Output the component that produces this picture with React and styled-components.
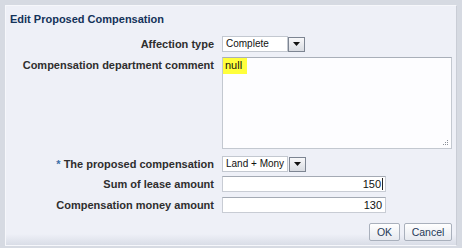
import styled, { createGlobalStyle } from 'styled-components'

const GlobalStyle = createGlobalStyle`
  html, body {
    margin: 0;
    padding: 0;
    background: #d6dae2;
    font-family: "Liberation Sans", Arial, sans-serif;
  }
`

const Frame = styled.div`
  width: 462px;
  height: 248px;
  box-sizing: border-box;
  padding: 5px 5px 2px 5px;
`

const Dialog = styled.div`
  width: 452px;
  height: 241px;
  box-sizing: border-box;
  border: 1px solid #f6f7fb;
  border-right-color: #c9cdd6;
  background: #eef0f7;
  display: flex;
  flex-direction: column;
`

const Title = styled.div`
  padding: 6px 0 0 4px;
  font-size: 11px;
  font-weight: bold;
  line-height: 14px;
  color: #14335a;
`

const Form = styled.div`
  display: flex;
  flex-direction: column;
  margin-top: 10px;
`

const Row = styled.div`
  display: grid;
  grid-template-columns: 208px 1fr;
  column-gap: 8px;
  align-items: ${(p) => (p.top ? 'start' : 'center')};
  margin-top: ${(p) => p.gap || 0}px;
`

const Label = styled.label`
  text-align: right;
  font-size: 11px;
  font-weight: bold;
  color: #2e2e2e;
  line-height: 14px;
  white-space: nowrap;
  padding-top: ${(p) => (p.top ? '1px' : '0')};
`

const Required = styled.span`
  color: #3b6fa8;
  margin-right: 3px;
`

const Select = styled.div`
  display: flex;
  align-items: center;
  gap: ${(p) => p.spacing || 0}px;
  width: 84px;
  height: 16px;
`

const SelectValue = styled.div`
  width: 66px;
  height: 16px;
  box-sizing: border-box;
  background: #ffffff;
  border: 1px solid #c3c8d0;
  font-size: 10px;
  line-height: 14px;
  padding-left: 3px;
  color: #111;
  white-space: nowrap;
  overflow: hidden;
`

const ArrowButton = styled.div`
  width: 17px;
  height: 15px;
  box-sizing: border-box;
  border: 1px solid #7d8592;
  background: linear-gradient(#f8f8fa, #d9dce2);
  display: flex;
  align-items: center;
  justify-content: center;
`

const TextArea = styled.div`
  position: relative;
  width: 230px;
  height: 92px;
  box-sizing: border-box;
  background: #fdfdff;
  border: 1px solid #c3c8d0;
  border-top-color: #a9afb9;
  font-size: 11px;
  color: #111;
`

const Highlight = styled.span`
  display: inline-block;
  background: #ffff3c;
  padding: 1px 5px 2px 2px;
  line-height: 13px;
`

const Grip = styled.svg`
  position: absolute;
  right: 2px;
  bottom: 2px;
`

const Input = styled.div`
  width: 164px;
  height: 16px;
  box-sizing: border-box;
  background: #ffffff;
  border: 1px solid #c8ccd4;
  border-top-color: #a4aab4;
  font-size: 11px;
  line-height: 14px;
  text-align: right;
  padding-right: ${(p) => (p.caret ? 2 : 3)}px;
  color: #111;
`

const Caret = styled.span`
  display: inline-block;
  width: 1px;
  height: 12px;
  background: #222;
  vertical-align: -2px;
  margin-left: 1px;
`

const Footer = styled.div`
  margin-top: auto;
  height: 22px;
  padding-right: 4px;
  display: flex;
  justify-content: flex-end;
  align-items: flex-start;
  gap: 4px;
  background: linear-gradient(#eef0f7 0, #eef0f7 11px, #d9dde7 100%);
`

const Button = styled.button`
  height: 18px;
  min-width: ${(p) => p.w}px;
  box-sizing: border-box;
  border: 1px solid #a9b0bc;
  border-radius: 2px;
  background: linear-gradient(#ffffff, #e6e9ef);
  font-family: "Liberation Sans", Arial, sans-serif;
  font-size: 10.5px;
  color: #263a58;
  padding: 0;
`

function Arrow() {
  return (
    <ArrowButton>
      <svg width="7" height="4" viewBox="0 0 7 4">
        <path d="M0 0h7L3.5 4z" fill="#111" />
      </svg>
    </ArrowButton>
  )
}

export default function App() {
  return (
    <>
      <GlobalStyle />
      <Frame>
        <Dialog>
          <Title>Edit Proposed Compensation</Title>
          <Form>
            <Row>
              <Label>Affection type</Label>
              <Select>
                <SelectValue>Complete</SelectValue>
                <Arrow />
              </Select>
            </Row>
            <Row gap={5} top>
              <Label top>Compensation department comment</Label>
              <TextArea>
                <Highlight>null</Highlight>
                <Grip width="7" height="7" viewBox="0 0 7 7">
                  <rect x="5" y="1" width="1" height="1" fill="#8a8f98" />
                  <rect x="3" y="3" width="1" height="1" fill="#8a8f98" />
                  <rect x="5" y="3" width="1" height="1" fill="#8a8f98" />
                  <rect x="1" y="5" width="1" height="1" fill="#8a8f98" />
                  <rect x="3" y="5" width="1" height="1" fill="#8a8f98" />
                  <rect x="5" y="5" width="1" height="1" fill="#8a8f98" />
                </Grip>
              </TextArea>
            </Row>
            <Row gap={7}>
              <Label>
                <Required>*</Required>The proposed compensation
              </Label>
              <Select spacing={1}>
                <SelectValue>Land + Mony</SelectValue>
                <Arrow />
              </Select>
            </Row>
            <Row gap={4}>
              <Label>Sum of lease amount</Label>
              <Input caret>
                150
                <Caret />
              </Input>
            </Row>
            <Row gap={5}>
              <Label>Compensation money amount</Label>
              <Input>130</Input>
            </Row>
          </Form>
          <Footer>
            <Button w={31}>OK</Button>
            <Button w={48}>Cancel</Button>
          </Footer>
        </Dialog>
      </Frame>
    </>
  )
}
